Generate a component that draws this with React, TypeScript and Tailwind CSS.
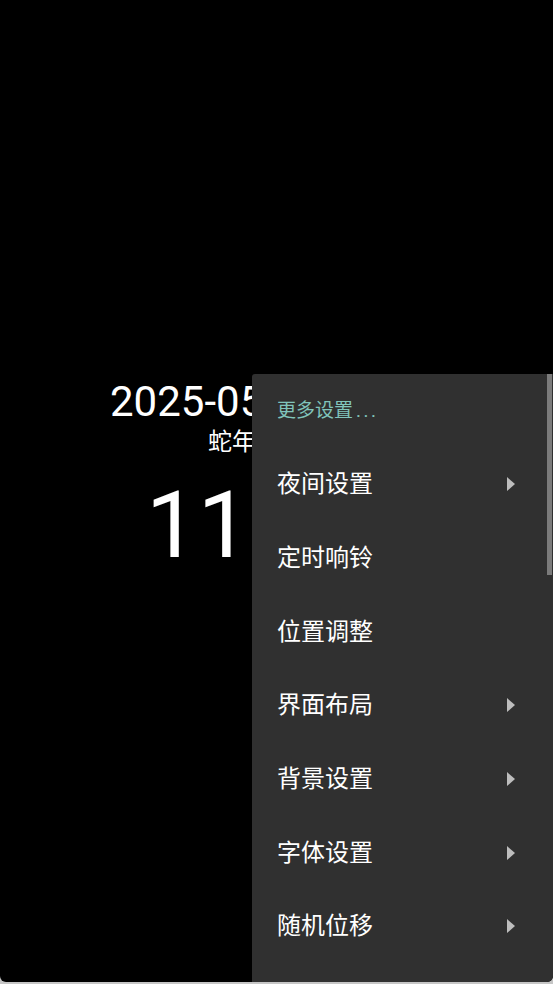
import React from "react";

const items: { label: string; sub: boolean }[] = [
  { label: "夜间设置", sub: true },
  { label: "定时响铃", sub: false },
  { label: "位置调整", sub: false },
  { label: "界面布局", sub: true },
  { label: "背景设置", sub: true },
  { label: "字体设置", sub: true },
  { label: "随机位移", sub: true },
  { label: "显示设置", sub: true },
];

function Arrow() {
  return (
    <svg width="8" height="14" viewBox="0 0 8 14" className="block">
      <polygon points="0,0 8,7 0,14" fill="#bdbdbd" />
    </svg>
  );
}

export default function App() {
  return (
    <div
      className="w-[553px] h-[984px] bg-[#c6c6c6] overflow-hidden"
      style={{ fontFamily: 'Roboto, "Noto Sans CJK SC", sans-serif' }}
    >
      <div className="relative h-[982px] bg-black rounded-b-[6px] overflow-hidden">
        <div className="flex flex-col pt-[381px] text-white">
          <div className="pl-[110px] text-[42px] leading-none whitespace-nowrap">2025-05-17 星期六</div>
          <div className="pl-[208px] mt-[7px] text-[24px] leading-none whitespace-nowrap">蛇年 四月二十</div>
          <div className="pl-[146px] mt-[26px] text-[92px] leading-none whitespace-nowrap">
            11<span className="ml-[24px]">:25</span>
          </div>
        </div>

        <div className="absolute left-[252px] top-[374px] right-0 bottom-0 bg-[#303030] rounded-tl-[3px] overflow-hidden">
          <div className="flex flex-col">
            <div className="h-[73.67px] flex items-center pl-[25px] text-[19px] text-[#80c4bb] leading-none">
              更多设置<span className="ml-[3px] tracking-[2.5px]">...</span>
            </div>
            {items.map((it) => (
              <div
                key={it.label}
                className="h-[73.67px] flex items-center justify-between pl-[25px] pr-[38px] text-[24px] text-white leading-none"
              >
                <span>{it.label}</span>
                {it.sub ? <Arrow /> : null}
              </div>
            ))}
          </div>
          <div className="absolute right-[1px] top-0 w-[5px] h-[201px] bg-[#7b7b7b]" />
        </div>
      </div>
    </div>
  );
}
